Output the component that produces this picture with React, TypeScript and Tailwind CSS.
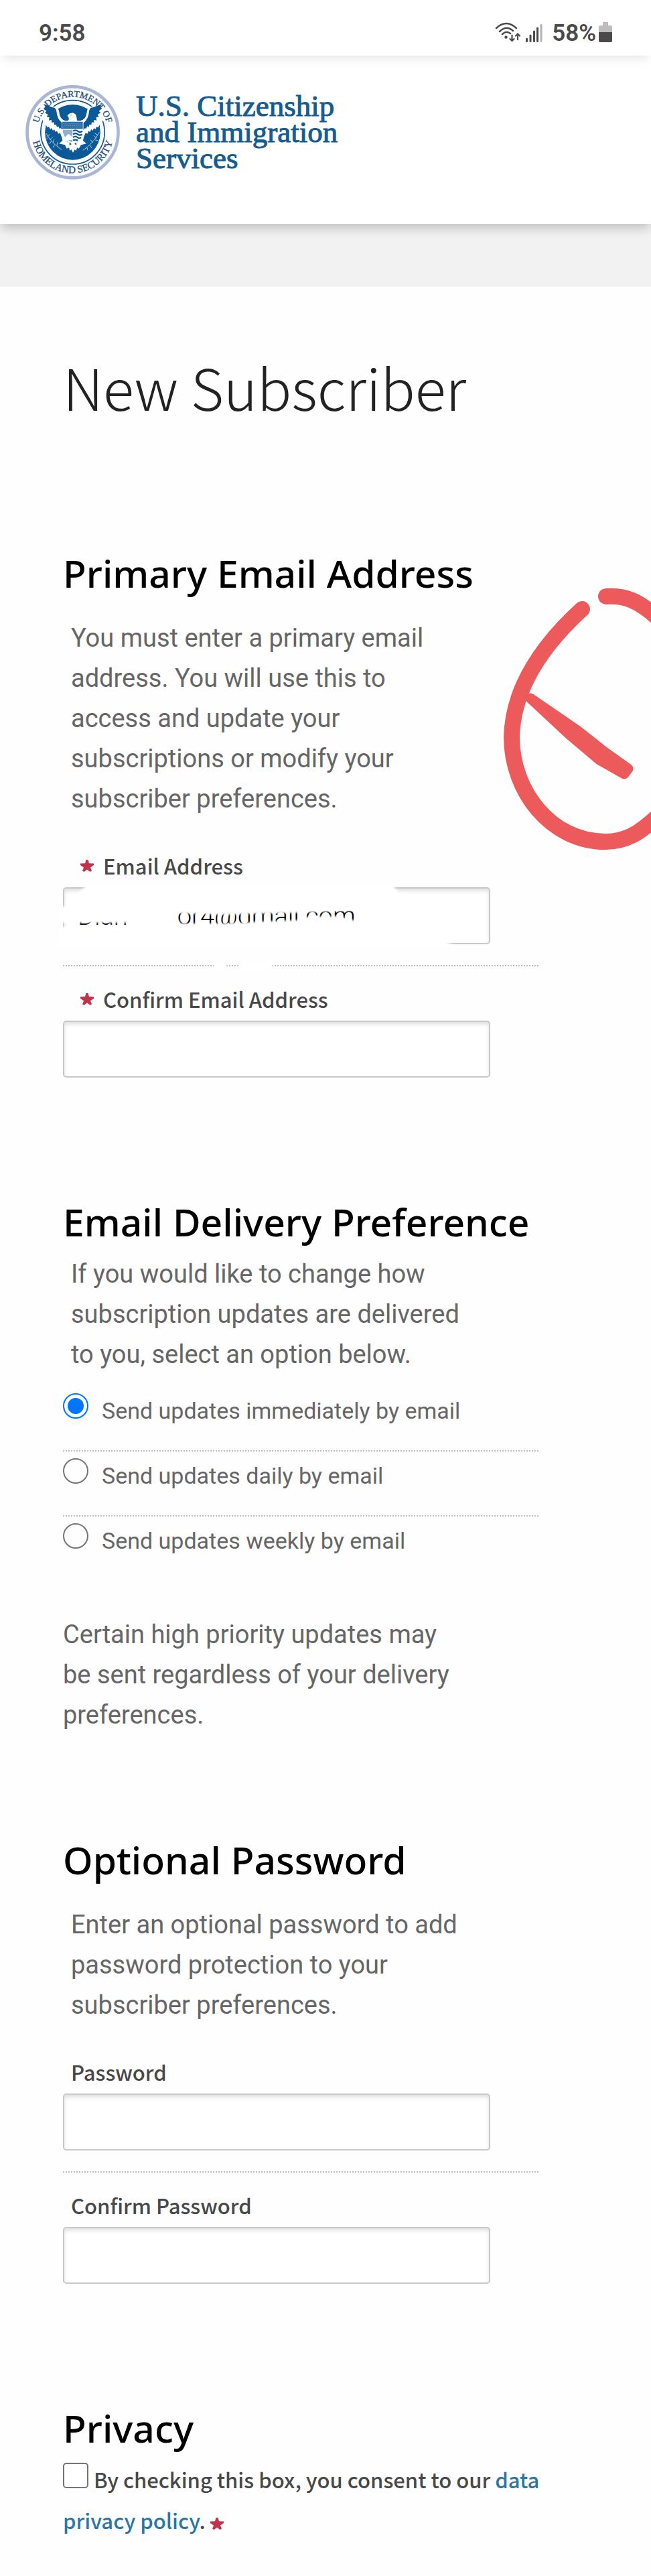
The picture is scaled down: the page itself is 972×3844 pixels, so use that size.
import { useId, useState, type ReactNode } from 'react';

const deliveryOptions = [
  { id: 'immediately', label: 'Send updates immediately by email' },
  { id: 'daily', label: 'Send updates daily by email' },
  { id: 'weekly', label: 'Send updates weekly by email' },
];

function Star() {
  return (
    <svg viewBox="0 0 20 18" className="inline-block h-[18px] w-5 shrink-0 fill-[#c0334b]" aria-label="required">
      <path d="M8.500 0 H11.500 L13 5.200 L20 5.500 V8 L15 11.500 L17 16.500 L14.500 18 L10 14.500 L5.500 18 L3 16.500 L5 11.500 L0 8 V5.500 L7 5.200 Z" />
    </svg>
  );
}

function Seal() {
  return (
    <svg viewBox="25 52 423 423" className="size-[141px] shrink-0" role="img" aria-label="Department of Homeland Security seal">
      <defs>
        <path id="seal-top" d="M 78.5 263 A 158 158 0 0 1 394.5 263" />
        <path id="seal-bottom" d="M 53.5 263 A 183 183 0 0 0 419.5 263" />
      </defs>
      <circle cx="236.5" cy="263" r="204" fill="#fff" stroke="#a8b7d6" strokeWidth="14" />
      <circle cx="236.5" cy="263" r="143" fill="none" stroke="#0b5a97" strokeWidth="5" />
      <circle cx="236.5" cy="263" r="124" fill="#0b5a97" />
      {/* wings */}
      <path
        d="M100 128 L150 148 Q172 150 176 172 Q178 205 204 212 L222 210 Q210 186 234 176 Q252 178 254 196 L252 210 L270 212 Q298 205 300 172 Q302 150 324 148 L374 128 L376 200 L360 240 L284 300 L190 300 L114 240 L98 200 Z"
        fill="#fff"
      />
      <path
        d="M106 136 L146 152 Q160 152 164 168 Q166 204 190 222 L190 254 L182 244 L178 248 L172 236 L166 240 L162 228 L154 230 L152 218 L142 220 L142 208 L130 210 L132 196 L120 194 L126 184 L112 176 L120 168 L106 156 L114 150 Z"
        fill="#0b5a97"
      />
      <path
        d="M368 136 L328 152 Q314 152 310 168 Q308 204 284 222 L284 254 L292 244 L296 248 L302 236 L308 240 L312 228 L320 230 L322 218 L332 220 L332 208 L344 210 L342 196 L354 194 L348 184 L362 176 L354 168 L368 156 L360 150 Z"
        fill="#0b5a97"
      />
      <path
        d="M116 230 L124 242 L130 238 L136 250 L142 244 L148 256 L154 250 L160 262 L166 257 L172 270 L180 266 L188 286 L192 304 L170 330 L130 318 L116 290 Z"
        fill="#0b5a97"
      />
      <path
        d="M358 230 L350 242 L344 238 L338 250 L332 244 L326 256 L320 250 L314 262 L308 257 L302 270 L294 266 L286 286 L282 304 L304 330 L344 318 L358 290 Z"
        fill="#0b5a97"
      />
      {/* head */}
      <path d="M216 212 Q220 200 228 196 L218 194 L212 190 Q220 176 236 177 Q254 180 256 212 Z" fill="#fff" />
      <circle cx="229" cy="186" r="2" fill="#0b5a97" />
      {/* shield */}
      <path d="M188 214 L284 214 L284 250 Q284 300 237 318 Q190 300 188 250 Z" fill="#fff" />
      <path d="M190 216 H282 V248 H190 Z" fill="#2a6fa8" />
      <path d="M196 224 H278 M200 232 H276 M196 240 H278" stroke="#9cc0de" strokeWidth="3" strokeDasharray="3 6" />
      <path d="M192 252 H235 V308 Q194 292 192 252 Z" fill="#93aed2" />
      <path d="M198 288 L218 270 L235 284 V298 H206 Z" fill="#fff" />
      <path d="M238 258 q11 -8 21 0 t21 0 M238 272 q11 -8 21 0 t20 0 M238 286 q11 -8 20 0 t16 0 M238 300 q8 -6 22 0" fill="none" stroke="#0b5a97" strokeWidth="7" />
      {/* tail and talons */}
      <path d="M176 314 L202 290 L214 308 L258 308 L270 290 L298 314 L274 320 L264 336 L256 332 L252 346 L246 340 L238 354 L230 340 L224 346 L220 332 L210 336 L202 320 Z" fill="#fff" />
      <path d="M222 308 L232 316 L222 322 Z M252 308 L244 316 L254 320 Z" fill="#0b5a97" />
      {/* olive branch and arrows */}
      <g fill="none" stroke="#a9c8e2" strokeWidth="3">
        <path d="M118 268 Q140 310 188 342 M122 282 l14 -10 M124 288 l-8 8 M134 298 l14 -14 M140 304 l-8 12 M148 312 l6 -18 M156 318 l-8 14 M166 324 l2 -16" />
        <path d="M356 262 Q330 312 282 344 M350 276 l-14 -8 M344 290 l-14 -12 M338 298 l12 2 M326 310 l-10 -14 M314 320 l8 14 M300 330 l4 14" />
      </g>
      <g fill="#1f4f80" stroke="#1f4f80" strokeWidth="1" fontFamily='"Liberation Serif", serif' textAnchor="middle">
        <text fontSize="41">
          <textPath href="#seal-top" startOffset="50%">U.S. DEPARTMENT OF</textPath>
        </text>
        <text fontSize="45">
          <textPath href="#seal-bottom" startOffset="50%">HOMELAND SECURITY</textPath>
        </text>
      </g>
    </svg>
  );
}

function StatusBar() {
  return (
    <div className="relative z-20 flex h-[83px] items-end justify-between bg-white pr-[58px] pb-5 pl-[58px] font-[Roboto,sans-serif] text-[35px] leading-[26px] font-semibold text-[#4a4a4a] shadow-[0_8px_14px_-4px_rgba(0,0,0,0.10)]">
      <span>9:58</span>
      <div className="flex items-end">
        <svg viewBox="0 0 71 30" className="mr-[14px] h-[30px] w-[71px]" fill="none" stroke="#4a4a4a" strokeLinecap="round">
          <path d="M2 9 Q17 -5 32 9 M7 14 Q17 4 27 13 M11 18 Q17 12 23 17" strokeWidth="2.500" />
          <circle cx="16.500" cy="22.500" r="2.200" fill="#4a4a4a" stroke="none" />
          <path d="M25.500 19.500 V27 M22.500 25 L25.500 28 L28.500 25 M34 26 V18.500 M31 20.500 L34 17.500 L37 20.500" strokeWidth="2.200" />
          <path d="M47.500 25 V28.500 M53 20 V28.500 M58.500 14 V28.500 M63.500 9 V28.500" strokeWidth="3" />
          <path d="M69 4 V28.500" stroke="#b5b5b5" strokeWidth="3" />
        </svg>
        <span>58%</span>
        <svg viewBox="0 0 20 30" className="ml-1 h-[30px] w-5">
          <path d="M6 0 H14 V5 H18 Q20 5 20 7 V15 H0 V7 Q0 5 2 5 H6 Z" fill="#bdbdbd" />
          <path d="M0 15 H20 V28 Q20 30 18 30 H2 Q0 30 0 28 Z" fill="#4a4a4a" />
        </svg>
      </div>
    </div>
  );
}

function Heading({ children }: { children: ReactNode }) {
  return (
    <h2 className="font-['Noto_Sans',sans-serif] text-[57px] leading-[76px] font-medium whitespace-nowrap text-black">{children}</h2>
  );
}

function Hint({ children }: { children: ReactNode }) {
  return <p className="ml-3 max-w-[584px]">{children}</p>;
}

interface FieldProps {
  label: string;
  type: string;
  required?: boolean;
  defaultValue?: string;
  cover?: ReactNode;
}

function Field({ label, type, required, defaultValue, cover }: FieldProps) {
  const id = useId();

  return (
    <div>
      <label
        htmlFor={id}
        className="ml-3 flex items-center font-['Noto_Sans_CJK_SC',sans-serif] text-[31px] leading-[44px] font-medium text-[#484848]"
      >
        {required && <span className="mr-[14px] ml-[14px] flex"><Star /></span>}
        {label}
      </label>
      <div className="relative mt-[10px] max-w-[638px]">
        <input
          id={id}
          type={type}
          defaultValue={defaultValue}
          className="block h-[85px] w-full rounded-[5px] border-2 border-[#c8c8c8] bg-white px-5 text-[38px] font-light text-black shadow-[inset_0_4px_6px_-1px_rgba(0,0,0,0.14)] outline-none"
        />
        {cover}
      </div>
    </div>
  );
}

function Divider() {
  return <hr className="mt-[31px] mb-[27px] border-0 border-t-2 border-dotted border-[#bdbdbd]" />;
}

// white brush strokes painted over the address
function Scribble() {
  return (
    <svg viewBox="0 0 638 125" className="pointer-events-none absolute top-0 left-0 h-[125px] w-full overflow-visible" preserveAspectRatio="none">
      <defs>
        <filter id="soft" x="-10%" y="-10%" width="120%" height="120%">
          <feGaussianBlur stdDeviation="1.500" />
        </filter>
      </defs>
      <g fill="#fff" filter="url(#soft)">
        <path d="M38 -5 H490 L500 6 V34 L440 35 L350 38 L240 41 L172 39 L140 53 L-6 53 V30 L6 28 L16 14 Z" />
        <path d="M-6 59 L100 59 L108 46 L170 46 L176 54 L240 54 L300 51 L350 49 L365 44 L412 43 L448 53 L520 60 L560 76 L592 90 H-6 Z" />
        <path d="M102 40 H170 V70 H102 Z" />
        <path d="M226 110 H244 V124 H226 Z M263 110 H312 V124 H263 Z" />
      </g>
    </svg>
  );
}

function Circled() {
  return (
    <svg viewBox="747 872 225 404" className="pointer-events-none absolute top-[444px] right-0 h-[404px] w-[225px]" fill="none" stroke="#ec5a5c" strokeLinecap="round" strokeLinejoin="round">
      <path d="M869 909 C835 940 766 1010 764 1100 C764 1180 822 1256 904 1256 C935 1256 955 1243 982 1218" strokeWidth="24" />
      <path d="M905 890 C935 888 955 898 982 922" strokeWidth="24" />
      <path d="M792 1042 L862 1090 L900 1120 L938 1147 L932 1155 L895 1134 L850 1096 Z" fill="#ec5a5c" strokeWidth="15" />
    </svg>
  );
}

export default function App() {
  const [delivery, setDelivery] = useState('immediately');

  return (
    <div className="min-h-screen overflow-hidden bg-[#fefefe] font-[Roboto,sans-serif] text-[38px] leading-[60px] text-[#666]">
      <StatusBar />
      <header className="relative z-10 flex h-[251px] items-start gap-6 bg-white pt-11 pl-[38px] shadow-[0_8px_16px_-2px_rgba(0,0,0,0.22)]">
        <Seal />
        <p className="pt-3 font-['Liberation_Serif',serif] text-[45px] leading-[39px] text-[#155c91] [-webkit-text-stroke:1px_#155c91]">
          U.S. Citizenship
          <br />
          and Immigration
          <br />
          Services
        </p>
      </header>
      <div className="h-[94px] bg-[#f2f2f2]" />

      <main className="relative pt-24 pb-[51px]">
        <Circled />
        <form className="mr-[168px] ml-[94px] max-w-[710px]">
          <h1 className="font-['Noto_Sans_CJK_SC',sans-serif] text-[85px] leading-[104px] font-light text-[#222]">New Subscriber</h1>

          <section className="mt-[189px]">
            <Heading>Primary Email Address</Heading>
            <div className="mt-[29px] mb-12">
              <Hint>
                You must enter a primary email address. You will use this to access and update your subscriptions or modify your
                subscriber preferences.
              </Hint>
            </div>
            <Field label="Email Address" type="text" required defaultValue={`Dian${' '.repeat(8)}or4@gmail.com`} cover={<Scribble />} />
            <Divider />
            <Field label="Confirm Email Address" type="text" required />
          </section>

          <section className="mt-[177px]">
            <Heading>Email Delivery Preference</Heading>
            <div className="mt-[10px] mb-[18px]">
              <Hint>If you would like to change how subscription updates are delivered to you, select an option below.</Hint>
            </div>
            <div className="divide-y-2 divide-dotted divide-[#bdbdbd]">
              {deliveryOptions.map((option) => (
                <div key={option.id} className="flex h-[97px] items-start pt-[10px]">
                  <input
                    id={option.id}
                    type="radio"
                    name="delivery"
                    checked={delivery === option.id}
                    onChange={() => setDelivery(option.id)}
                    className="size-[38px] shrink-0 appearance-none rounded-full border-2 border-[#757575] bg-clip-content p-[5px] checked:border-[#0075ff] checked:bg-[#0075ff]"
                  />
                  <label htmlFor={option.id} className="pt-1 pl-5 text-[34px] leading-[44px]">
                    {option.label}
                  </label>
                </div>
              ))}
            </div>
            <p className="mt-[49px] max-w-[584px]">
              Certain high priority updates may be sent regardless of your delivery preferences.
            </p>
          </section>

          <section className="mt-[148px]">
            <Heading>Optional Password</Heading>
            <div className="mt-[29px] mb-12">
              <Hint>Enter an optional password to add password protection to your subscriber preferences.</Hint>
            </div>
            <Field label="Password" type="password" />
            <Divider />
            <Field label="Confirm Password" type="password" />
          </section>

          <section className="mt-[177px]">
            <Heading>Privacy</Heading>
            <div className="-mr-4 mt-2 font-['Noto_Sans_CJK_SC',sans-serif] text-[31px] leading-[61px] font-medium text-[#484848]">
              <input
                id="consent"
                type="checkbox"
                className="mr-2 inline-block size-[38px] appearance-none rounded-[5px] border-2 border-[#757575] bg-white align-baseline checked:bg-[#0075ff]"
              />
              <label htmlFor="consent">
                By checking this box, you consent to our{' '}
                <a href="#privacy" className="text-[#2a76a5]">
                  data privacy policy
                </a>
                . <Star />
              </label>
            </div>
          </section>
        </form>
      </main>
    </div>
  );
}
